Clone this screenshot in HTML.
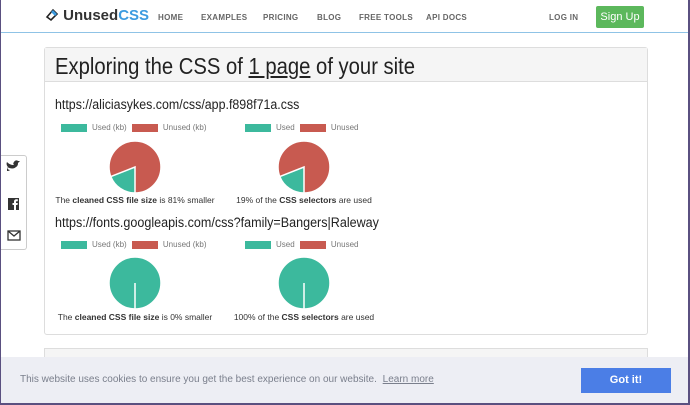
<!DOCTYPE html>
<html><head><meta charset="utf-8"><style>
*{margin:0;padding:0;box-sizing:border-box}
body{width:690px;height:405px;overflow:hidden;background:#5a5080;font-family:"Liberation Sans",sans-serif;position:relative}
.page{position:absolute;left:1px;top:0;width:687px;height:403px;background:#fff;overflow:hidden}
.nav{position:absolute;left:0;top:0;width:100%;height:33px;border-bottom:1px solid #8fc3e6}
.nav a{position:absolute;top:13px;font-size:8px;color:#666;letter-spacing:.3px;font-weight:bold}
.logo{position:absolute;left:44px;top:7px;font-size:15px;font-weight:bold;color:#333}
.logo span{color:#3d9ce0}
.signup{position:absolute;top:6px;width:48px;height:22px;background:#5cb85c;color:#fff;font-size:11px;text-align:center;line-height:22px;border-radius:2px;left:595px}
.card{position:absolute;left:43px;top:47px;width:604px;height:288px;border:1px solid #ddd;border-radius:3px}
.hd{height:34px;background:#f5f5f5;border-bottom:1px solid #ddd;padding-left:10px;line-height:36px}
.hd div{font-size:23px;color:#222;transform:scaleX(.88);transform-origin:left;white-space:nowrap}
.url{position:absolute;left:10px;font-size:13.5px;color:#222;transform-origin:left;white-space:nowrap}
.leg{position:absolute;font-size:8px;color:#777;height:9px}
.sw{display:inline-block;width:26px;height:8px;vertical-align:middle;margin-right:5px}
.g{background:#3cb99d}.r{background:#c85a50}
.cap{position:absolute;font-size:8.5px;color:#333;width:200px;text-align:center}
.share{position:absolute;left:0;top:155px;width:26px;height:95px;border:1px solid #ccc;border-left:none;border-radius:0 3px 3px 0;background:#fff}
.card2{position:absolute;left:43px;top:348px;width:604px;height:20px;border:1px solid #ddd;background:#f5f5f5}
.cookie{position:absolute;left:0;top:357px;width:100%;height:46px;background:#edeef4;font-size:10px;color:#7a7f8c}
.btn{position:absolute;left:580px;top:11px;width:90px;height:25px;background:#4b7ee6;color:#fff;font-weight:bold;font-size:11px;text-align:center;line-height:25px}
</style></head><body><div class="page">
<div class="nav">
<div class="logo"><svg width="14" height="14" viewBox="0 0 14 14" style="vertical-align:-2px"><path d="M2 9 L8 2 L12 6 L6 12 Z" fill="none" stroke="#222" stroke-width="1.6"/><path d="M8 2 L12 6 L10 8 L6 4Z" fill="#3d9ce0"/></svg> Unused<span>CSS</span></div>
<a style="left:157px">HOME</a><a style="left:200px">EXAMPLES</a><a style="left:262px">PRICING</a><a style="left:316px">BLOG</a><a style="left:358px">FREE TOOLS</a><a style="left:425px">API DOCS</a><a style="left:548px">LOG IN</a>
<div class="signup">Sign Up</div>
</div>
<div class="card">
<div class="hd"><div>Exploring the CSS of <u>1 page</u> of your site</div></div>
<div class="url" style="top:49px;transform:scaleX(.92)">https://aliciasykes.com/css/app.f898f71a.css</div>
<div class="leg" style="left:16px;top:75px"><span class="sw g"></span>Used (kb) <span class="sw r" style="margin-left:3px"></span>Unused (kb)</div>
<div class="leg" style="left:200px;top:75px"><span class="sw g"></span>Used <span class="sw r" style="margin-left:3px"></span>Unused</div>
<svg style="position:absolute;left:0;top:0" width="604" height="288">
<g stroke="#fff" stroke-width="1.5">
<circle cx="90" cy="119" r="26" fill="#c85a50"/><path d="M90 119 L90 145 A26 26 0 0 1 65.8 128.6 Z" fill="#3cb99d"/>
<circle cx="259" cy="119" r="26" fill="#c85a50"/><path d="M259 119 L259 145 A26 26 0 0 1 234.8 128.6 Z" fill="#3cb99d"/>
<circle cx="90" cy="235" r="26" fill="#3cb99d"/><line x1="90" y1="235" x2="90" y2="261"/>
<circle cx="259" cy="235" r="26" fill="#3cb99d"/><line x1="259" y1="235" x2="259" y2="261"/>
</g></svg>
<div class="cap" style="left:-10px;top:147px">The <b>cleaned CSS file size</b> is 81% smaller</div>
<div class="cap" style="left:159px;top:147px">19% of the <b>CSS selectors</b> are used</div>
<div class="url" style="top:167px;transform:scaleX(.93)">https://fonts.googleapis.com/css?family=Bangers|Raleway</div>
<div class="leg" style="left:16px;top:192px"><span class="sw g"></span>Used (kb) <span class="sw r" style="margin-left:3px"></span>Unused (kb)</div>
<div class="leg" style="left:200px;top:192px"><span class="sw g"></span>Used <span class="sw r" style="margin-left:3px"></span>Unused</div>
<div class="cap" style="left:-10px;top:264px">The <b>cleaned CSS file size</b> is 0% smaller</div>
<div class="cap" style="left:159px;top:264px">100% of the <b>CSS selectors</b> are used</div>
</div>
<div class="card2"></div>
<div class="share">
<svg width="26" height="95" viewBox="0 0 26 95"><path d="M6 11c4 2 7 2 9 0 2-1 2-3 2-4l2-2-2 0c-1-1-3-1-4 1-1 1-1 2 0 3-3 0-5-1-7-3-1 2 0 4 1 5l-1 0c0 1 1 3 3 3-1 1-2 1-3 1z" fill="#333"/><rect x="7" y="42" width="11" height="12" fill="#333"/><path d="M13 54v-5h-1.5v-2h1.5v-1.5c0-1.5 1-2.3 2.3-2.3h1.5v2h-1c-.6 0-.8.3-.8.8v1h1.8l-.3 2h-1.5v5z" fill="#fff"/><rect x="7" y="75" width="12" height="9" fill="none" stroke="#333" stroke-width="1.3"/><path d="M7 75l6 5 6-5" fill="none" stroke="#333" stroke-width="1.3"/></svg>
</div>
<div class="cookie"><div style="position:absolute;left:19px;top:17px;white-space:nowrap">This website uses cookies to ensure you get the best experience on our website. <u style="margin-left:3px">Learn more</u></div><div class="btn">Got it!</div></div>
</div></body></html>
